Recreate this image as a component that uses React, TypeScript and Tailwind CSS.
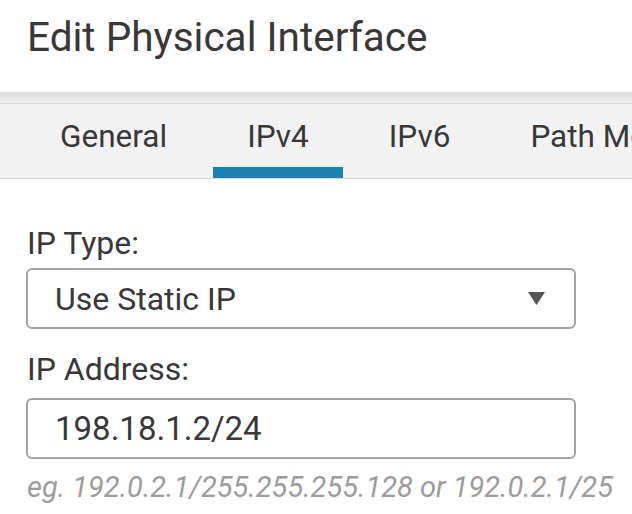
import React from "react";

export default function App() {
  const tabs = ["General", "IPv4", "IPv6", "Path Monitoring"];
  return (
    <div
      className="w-[632px] h-[514px] overflow-hidden bg-white text-[#383838]"
      style={{ fontFamily: "Roboto, 'Liberation Sans', sans-serif" }}
    >
      <div className="h-[92px] pl-[27px] pt-[13px] text-[40.5px] leading-[48px]">
        Edit Physical Interface
      </div>
      <div className="h-[11px] bg-gradient-to-b from-[#dcdcdc] to-[#ededed]" />
      <div className="h-[76px] border-y border-[#d8d8d8] bg-[#f2f2f2] flex gap-[12px] pl-[26px] whitespace-nowrap overflow-hidden">
        {tabs.map((t, i) => (
          <div key={t} className="relative px-[34px] flex items-center pb-[8px] text-[31.5px] shrink-0">
            {t}
            {i === 1 && (
              <div className="absolute left-0 right-0 bottom-0 h-[11px] bg-[#1a82b2]" />
            )}
          </div>
        ))}
      </div>
      <div className="px-[26px] pt-[44px]">
        <div className="pl-[1px] text-[32px] leading-[40px] h-[45px]">IP Type:</div>
        <div className="h-[61px] w-[550px] rounded-[6px] border-2 border-[#a3a3a7] flex items-center justify-between pl-[27px] pr-[29px] text-[32px]">
          <span>Use Static IP</span>
          <svg width="17" height="13" viewBox="0 0 17 13">
            <polygon points="0,0 17,0 8.5,13" fill="#555" />
          </svg>
        </div>
        <div className="pl-[1px] text-[32px] leading-[40px] mt-[20px] h-[49px]">IP Address:</div>
        <div className="h-[61px] w-[550px] rounded-[6px] border-2 border-[#a3a3a7] flex items-center pl-[27px] text-[33px]">
          198.18.1.2/24
        </div>
        <div className="pl-[1px] mt-[10px] text-[29px] leading-[36px] italic text-[#9c9c9c] whitespace-nowrap">
          eg. 192.0.2.1/255.255.255.128 or 192.0.2.1/25
        </div>
      </div>
    </div>
  );
}
